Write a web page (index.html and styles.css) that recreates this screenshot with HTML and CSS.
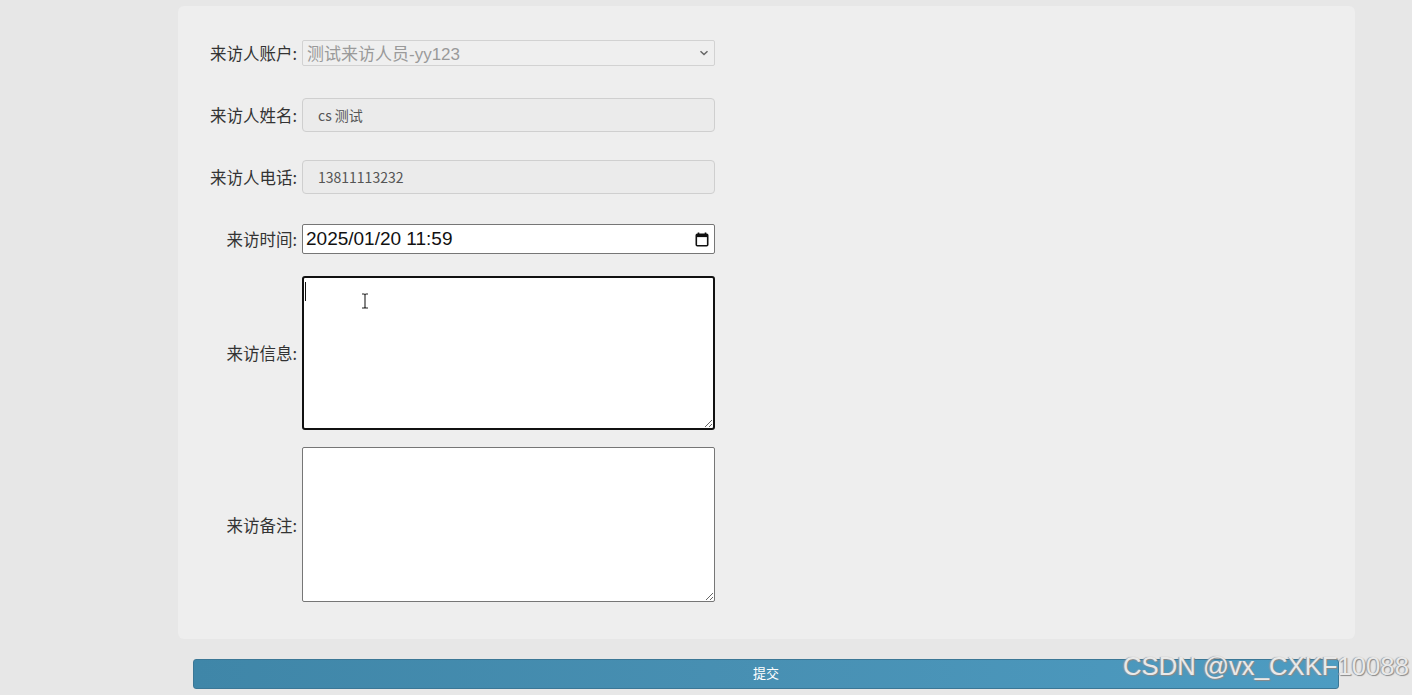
FILE: index.html
```html
<!DOCTYPE html>
<html lang="zh">
<head>
<meta charset="utf-8">
<title>来访登记</title>
<link rel="stylesheet" href="styles.css">
</head>
<body>
<div class="page">
  <div class="card">
    <div class="row">
      <label class="lbl">来访人账户:</label>
      <div class="select">
        <span class="select-text">测试来访人员-yy123</span>
        <svg class="chev" width="10" height="6" viewBox="0 0 10 6"><path d="M1.5 1.2 L5 4.5 L8.5 1.2" fill="none" stroke="#666" stroke-width="1.5"/></svg>
      </div>
    </div>
    <div class="row">
      <label class="lbl">来访人姓名:</label>
      <div class="ro-input">cs 测试</div>
    </div>
    <div class="row">
      <label class="lbl">来访人电话:</label>
      <div class="ro-input">13811113232</div>
    </div>
    <div class="row">
      <label class="lbl">来访时间:</label>
      <div class="dt-input">
        <span>2025/01/20 11:59</span>
        <svg class="cal" width="14" height="15" viewBox="0 0 14 15"><path d="M3.5 0.5 V3 M10.5 0.5 V3" stroke="#111" stroke-width="1.6"/><rect x="1.3" y="2.3" width="11.4" height="11.4" rx="1" fill="none" stroke="#111" stroke-width="1.6"/><rect x="1.3" y="2.3" width="11.4" height="2.8" fill="#111"/></svg>
      </div>
    </div>
    <div class="row row-info">
      <label class="lbl">来访信息:</label>
      <div class="ta-wrap">
        <textarea class="ta ta-focus"></textarea>
        <span class="caret"></span>
        <svg class="ibeam" width="8" height="16" viewBox="0 0 8 16"><path d="M1 1 H3 Q4 1 4 2.5 V13.5 Q4 15 3 15 H1 M7 1 H5 Q4 1 4 2.5 M4 13.5 Q4 15 5 15 H7" fill="none" stroke="#222" stroke-width="1.1"/></svg>
      </div>
    </div>
    <div class="row row-note">
      <label class="lbl">来访备注:</label>
      <textarea class="ta"></textarea>
    </div>
  </div>
  <button class="submit" type="button">提交</button>
</div>
<div class="watermark">CSDN @vx_CXKF10088</div>
</body>
</html>
```
FILE: styles.css
```css
html, body {
  margin: 0;
  padding: 0;
  background: #e7e7e7;
  font-family: "Microsoft YaHei", "Noto Sans CJK SC", "Liberation Sans", sans-serif;
  height: 695px;
  overflow: hidden;
}
.page {
  padding: 6px 57px 0 178px;
}
.card {
  background: #eeeeee;
  border-radius: 6px;
  padding: 30px 0 37px 0;
}
.row {
  display: flex;
  align-items: center;
  min-height: 34px;
  margin-top: 28px;
}
.row:first-child { margin-top: 0; }
.row-info { margin-top: 20px; }
.row-note { margin-top: 17px; }
.lbl {
  width: 119px;
  text-align: right;
  font-size: 16.5px;
  color: #333;
  margin-right: 5px;
  white-space: nowrap;
}
.select {
  width: 413px;
  height: 26px;
  box-sizing: border-box;
  border: 1px solid #d2d2d2;
  border-radius: 2px;
  background: #efefef;
  display: flex;
  align-items: center;
  justify-content: space-between;
  padding: 0 4px 2px 4px;
}
.select-text {
  font-size: 17px;
  color: #9a9a9a;
  font-family: "Liberation Sans", "Noto Sans CJK SC", sans-serif;
}
.chev { margin-right: 1px; margin-top: 2px; }
.ro-input {
  width: 413px;
  height: 34px;
  box-sizing: border-box;
  border: 1px solid #cfcfcf;
  border-radius: 4px;
  background: #ebebeb;
  font-size: 14px;
  color: #555;
  padding: 0 15px;
  display: flex;
  align-items: center;
}
.dt-input {
  width: 413px;
  height: 30px;
  box-sizing: border-box;
  border: 1px solid #767676;
  border-radius: 2px;
  background: #fff;
  display: flex;
  align-items: center;
  justify-content: space-between;
  padding: 0 5px 0 3px;
  font-size: 19px;
  color: #111;
  font-family: "Liberation Sans", sans-serif;
}
.ta-wrap {
  position: relative;
  width: 413px;
  height: 154px;
}
.ta {
  width: 413px;
  height: 155px;
  box-sizing: border-box;
  border: 1px solid #767676;
  border-radius: 2px;
  background: #fff;
  margin: 0;
  display: block;
  resize: vertical;
}
.ta-focus {
  height: 154px;
  border: 2px solid #111;
  border-radius: 3px;
}
.caret {
  position: absolute;
  left: 3px;
  top: 6px;
  width: 1px;
  height: 19px;
  background: #111;
}
.ibeam {
  position: absolute;
  left: 59px;
  top: 17px;
}
.submit {
  display: block;
  margin: 20px 0 0 15px;
  width: 1146px;
  height: 30px;
  border: 1px solid #3b7796;
  border-radius: 3px;
  background: linear-gradient(to right, #3f86a8, #4890b3 50%, #4d9cc2);
  color: #fff;
  font-size: 13px;
  font-family: "Microsoft YaHei", "Noto Sans CJK SC", sans-serif;
  padding: 0 0 3px 0;
}
.watermark {
  position: absolute;
  left: 1123px;
  top: 652px;
  font-family: "Liberation Sans", sans-serif;
  font-size: 25.7px;
  color: #e9e9e9;
  text-shadow: 1px 1px 1px #8a8a8a, -1px 0 1px #9a9a9a;
  white-space: nowrap;
}
```
